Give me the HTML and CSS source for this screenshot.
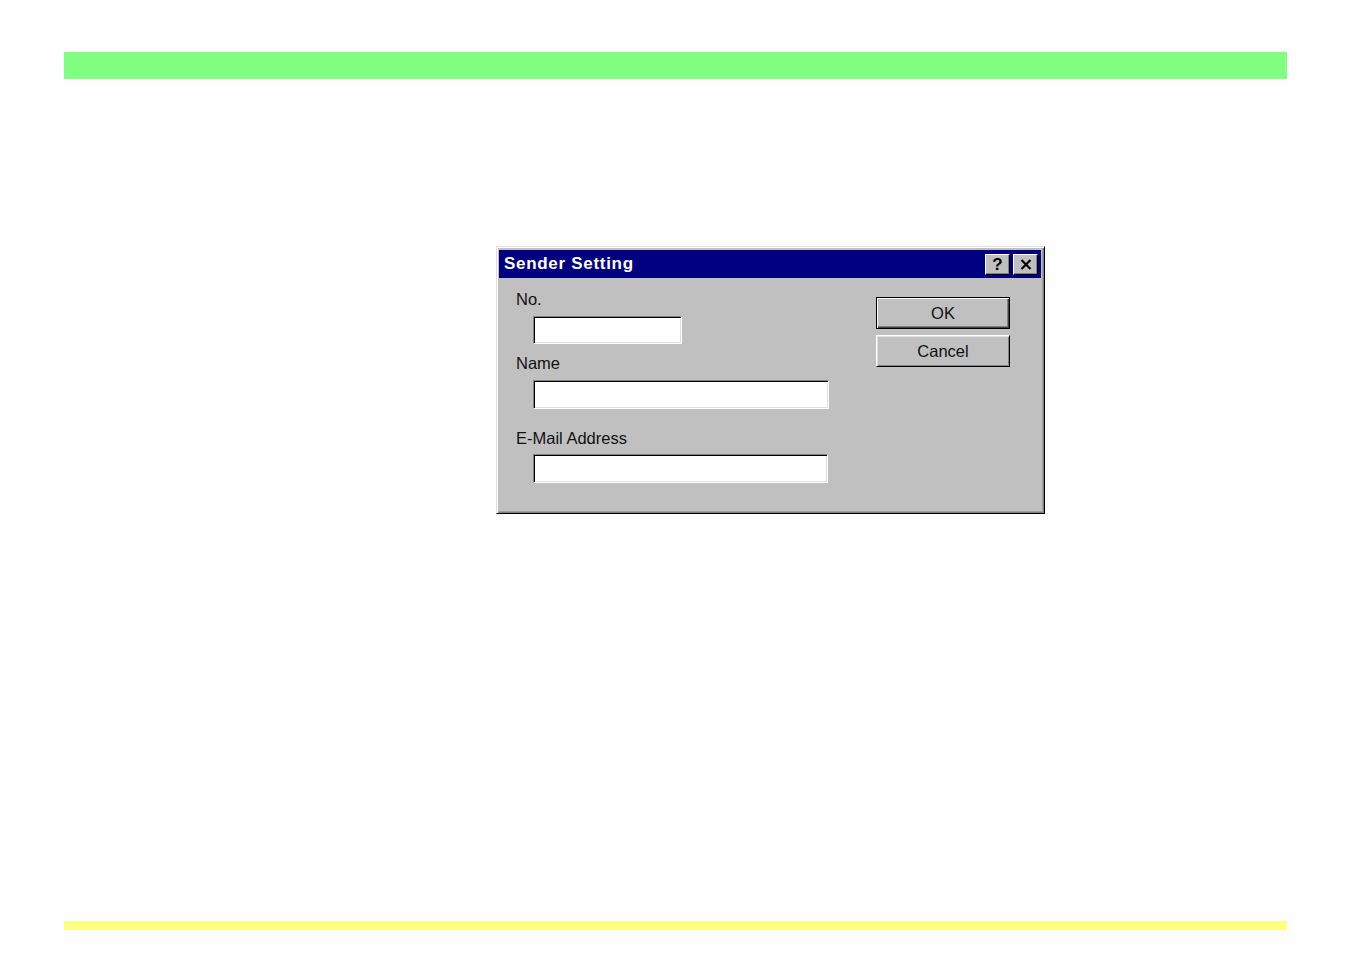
FILE: index.html
```html
<!DOCTYPE html>
<html>
<head>
<meta charset="utf-8">
<title>Sender Setting</title>
<link rel="stylesheet" href="styles.css">
</head>
<body>
<div class="page">
  <div class="bar-top"></div>
  <div class="dialog">
    <div class="titlebar">
      <span class="title">Sender Setting</span>
      <div class="title-btns">
        <span class="tbtn help">?</span>
        <span class="tbtn close"><svg width="12" height="11" viewBox="0 0 12 11"><path d="M1.5 1 L10.5 10 M10.5 1 L1.5 10" stroke="#000" stroke-width="2.2" fill="none"/></svg></span>
      </div>
    </div>
    <div class="body">
      <div class="fields">
        <div class="label l-no">No.</div>
        <div class="input i-no"></div>
        <div class="label l-name">Name</div>
        <div class="input i-name"></div>
        <div class="label l-mail">E-Mail Address</div>
        <div class="input i-mail"></div>
      </div>
      <div class="buttons">
        <div class="btn ok">OK</div>
        <div class="btn cancel">Cancel</div>
      </div>
    </div>
  </div>
  <div class="bar-bottom"></div>
</div>
</body>
</html>
```

FILE: styles.css
```css
html, body {
  margin: 0;
  padding: 0;
  background: #fefefe;
}
.page {
  padding: 52px 0 0 64px;
  width: 1223px;
  font-family: "Liberation Sans", Arial, sans-serif;
}
.bar-top {
  height: 27px;
  background: #80ff80;
}
.bar-bottom {
  margin-top: 407px;
  height: 9px;
  background: #ffff80;
}
.dialog {
  margin: 167px 0 0 432px;
  width: 549px;
  height: 268px;
  box-sizing: border-box;
  background: #c0c0c0;
  border: 1px solid;
  border-color: #dfdfdf #000 #000 #dfdfdf;
  box-shadow: inset 1px 1px #fff, inset -1px -1px #808080, inset -2px -2px #a0a0a0;
  padding: 3px 3px 2px 2px;
}
.titlebar {
  height: 28px;
  background: #000080;
  display: flex;
  align-items: center;
  justify-content: space-between;
  padding: 0 3px 0 5px;
}
.title {
  color: #fff;
  font-weight: bold;
  font-size: 17px;
  letter-spacing: 0.7px;
}
.title-btns {
  display: flex;
  gap: 3px;
}
.tbtn {
  width: 25px;
  height: 21px;
  box-sizing: border-box;
  background: #c0c0c0;
  border: 1px solid;
  border-color: #fff #000 #000 #fff;
  box-shadow: inset -1px -1px #808080;
  display: flex;
  align-items: center;
  justify-content: center;
  font-weight: bold;
  font-size: 17px;
  color: #000;
  line-height: 1;
}
.body {
  display: flex;
}
.fields {
  padding-left: 17px;
}
.label {
  font-size: 16.5px;
  line-height: 18px;
  color: #111;
}
.l-no { margin-top: 12px; }
.l-name { margin-top: 10px; }
.l-mail { margin-top: 20px; }
.input {
  margin-left: 17px;
  box-sizing: border-box;
  background: #fff;
  border: 1px solid;
  border-color: #808080 #fff #fff #808080;
  box-shadow: inset 1px 1px #000, inset -1px -1px #dfdfdf;
}
.i-no { margin-top: 8px; width: 149px; height: 28px; }
.i-name { margin-top: 8px; width: 296px; height: 29px; }
.i-mail { margin-top: 7px; width: 295px; height: 29px; }
.buttons {
  margin-left: 47px;
  padding-top: 19px;
  display: flex;
  flex-direction: column;
  gap: 6px;
}
.btn {
  width: 134px;
  box-sizing: border-box;
  background: #c0c0c0;
  display: flex;
  align-items: center;
  justify-content: center;
  font-size: 16.5px;
  color: #111;
  border: 1px solid;
}
.ok {
  height: 32px;
  border-color: #000;
  box-shadow: inset 1px 1px #fff, inset -1px -1px #404040, inset -2px -2px #808080;
}
.cancel {
  height: 32px;
  border-color: #fff #000 #000 #fff;
  box-shadow: inset 1px 1px #dfdfdf, inset -1px -1px #808080;
}
```
